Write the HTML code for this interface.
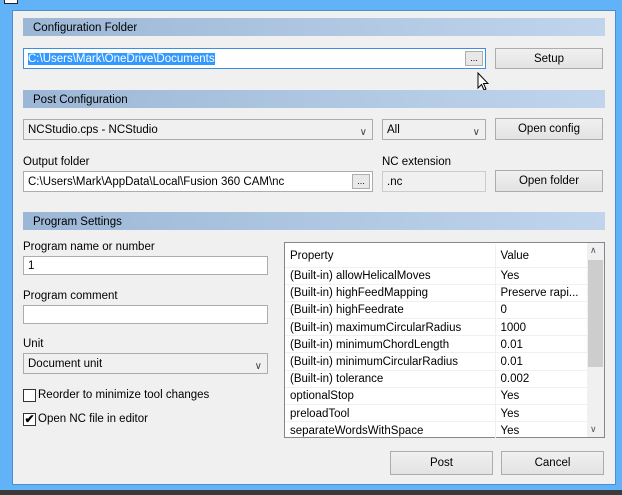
<!DOCTYPE html><html><head><style>
*{box-sizing:border-box;margin:0;padding:0}
body{width:622px;height:495px;background:#3a3a3a;position:relative;overflow:hidden;font-family:"Liberation Sans",sans-serif;font-size:11.5px;color:#000}
.frame{position:absolute;left:0;top:0;width:622px;height:490px;background:#62b2f8}
.content{position:absolute;left:12px;top:10px;width:604px;height:475px;background:#f0f0f0;border:1px solid #4a8fd0}
.a{position:absolute}
.hdr{position:absolute;left:23px;width:582px;height:18px;background:linear-gradient(90deg,#9cb7d6,#c0d5ec);padding-left:10px;line-height:20px;font-size:11.5px}
.inp{position:absolute;background:#fff;border:1px solid #acacac;height:21px;line-height:20px;padding-left:4px;white-space:nowrap;overflow:hidden}
.btn{position:absolute;background:linear-gradient(#f0f0f0,#e3e3e3);border:1px solid #acacac;text-align:center;line-height:20px}
.dots{position:absolute;right:2px;top:2px;width:18px;height:15px;border:1px solid #adadad;background:#e8e8e8;font-size:9px;line-height:12px;text-align:center}
.arrow{position:absolute;right:5px;top:3px;font-size:10px;color:#444}
.cb{position:absolute;width:13px;height:13px;border:1px solid #333;background:#fff}
table{border-collapse:collapse;position:absolute;left:285px;top:244px;width:302px}
td{height:17.2px;border-bottom:1px solid #f0f0f0;padding-left:5px;padding-top:1px;white-space:nowrap;font-size:11.5px}
td+td{border-left:1px solid #f0f0f0}
</style></head><body>
<div class="frame"></div>
<div class="a" style="left:4px;top:0;width:14px;height:4px;border:1px solid #222;border-top:none;background:#fff"></div>
<div class="content"></div>
<div class="hdr" style="top:18px">Configuration Folder</div>
<div class="inp" style="left:23px;top:48px;width:463px;border-color:#3c8fe0"><span style="background:#3399ff;color:#fff">C:\Users\Mark\OneDrive\Documents</span><div class="dots">...</div></div>
<div class="btn" style="left:495px;top:48px;width:108px;height:21px">Setup</div>
<svg class="a" style="left:477px;top:72px" width="12" height="20" viewBox="0 0 12 20"><path d="M1 1 L1 16 L4.5 12.5 L7 18 L9 17 L6.5 11.5 L11 11.5 Z" fill="#fff" stroke="#000" stroke-width="1"/></svg>
<div class="hdr" style="top:90px">Post Configuration</div>
<div class="inp" style="left:23px;top:119px;width:350px;background:#f0f0f0">NCStudio.cps - NCStudio<span class="arrow">&#8744;</span></div>
<div class="inp" style="left:382px;top:119px;width:104px;background:#f0f0f0">All<span class="arrow">&#8744;</span></div>
<div class="btn" style="left:495px;top:118px;width:108px;height:22px">Open config</div>
<div class="a" style="left:23px;top:156px">Output folder</div>
<div class="a" style="left:382px;top:156px">NC extension</div>
<div class="inp" style="left:23px;top:171px;width:350px">C:\Users\Mark\AppData\Local\Fusion 360 CAM\nc<div class="dots">...</div></div>
<div class="inp" style="left:382px;top:171px;width:104px;background:#f0f0f0;border-color:#ccc">.nc</div>
<div class="btn" style="left:495px;top:170px;width:108px;height:22px">Open folder</div>
<div class="hdr" style="top:212px">Program Settings</div>
<div class="a" style="left:23px;top:241px">Program name or number</div>
<div class="inp" style="left:23px;top:256px;width:245px;height:19px;line-height:18px">1</div>
<div class="a" style="left:23px;top:290px">Program comment</div>
<div class="inp" style="left:23px;top:305px;width:245px;height:19px"></div>
<div class="a" style="left:23px;top:338px">Unit</div>
<div class="inp" style="left:23px;top:353px;width:245px;background:#f0f0f0">Document unit<span class="arrow">&#8744;</span></div>
<div class="cb" style="left:23px;top:389px"></div><div class="a" style="left:38px;top:389px">Reorder to minimize tool changes</div>
<div class="cb" style="left:23px;top:413px;font-size:12px;line-height:10px;text-align:center;font-weight:bold">&#10004;</div><div class="a" style="left:38px;top:413px">Open NC file in editor</div>
<div class="a" style="left:284px;top:242px;width:321px;height:196px;background:#fff;border:1px solid #828790"></div>
<table>
<tr><td style="width:210px;height:23px">Property</td><td>Value</td></tr>
<tr><td>(Built-in) allowHelicalMoves</td><td>Yes</td></tr>
<tr><td>(Built-in) highFeedMapping</td><td>Preserve rapi...</td></tr>
<tr><td>(Built-in) highFeedrate</td><td>0</td></tr>
<tr><td>(Built-in) maximumCircularRadius</td><td>1000</td></tr>
<tr><td>(Built-in) minimumChordLength</td><td>0.01</td></tr>
<tr><td>(Built-in) minimumCircularRadius</td><td>0.01</td></tr>
<tr><td>(Built-in) tolerance</td><td>0.002</td></tr>
<tr><td>optionalStop</td><td>Yes</td></tr>
<tr><td>preloadTool</td><td>Yes</td></tr>
<tr><td>separateWordsWithSpace</td><td>Yes</td></tr>
</table>
<div class="a" style="left:587px;top:243px;width:17px;height:194px;background:#f0f0f0"></div>
<div class="a" style="left:588px;top:260px;width:15px;height:107px;background:#cdcdcd"></div>
<div class="a" style="left:590px;top:245px;font-size:9px;color:#555">&#8743;</div>
<div class="a" style="left:590px;top:424px;font-size:9px;color:#555">&#8744;</div>
<div class="btn" style="left:390px;top:451px;width:103px;height:24px;line-height:23px">Post</div>
<div class="btn" style="left:501px;top:451px;width:103px;height:24px;line-height:23px">Cancel</div>
</body></html>
